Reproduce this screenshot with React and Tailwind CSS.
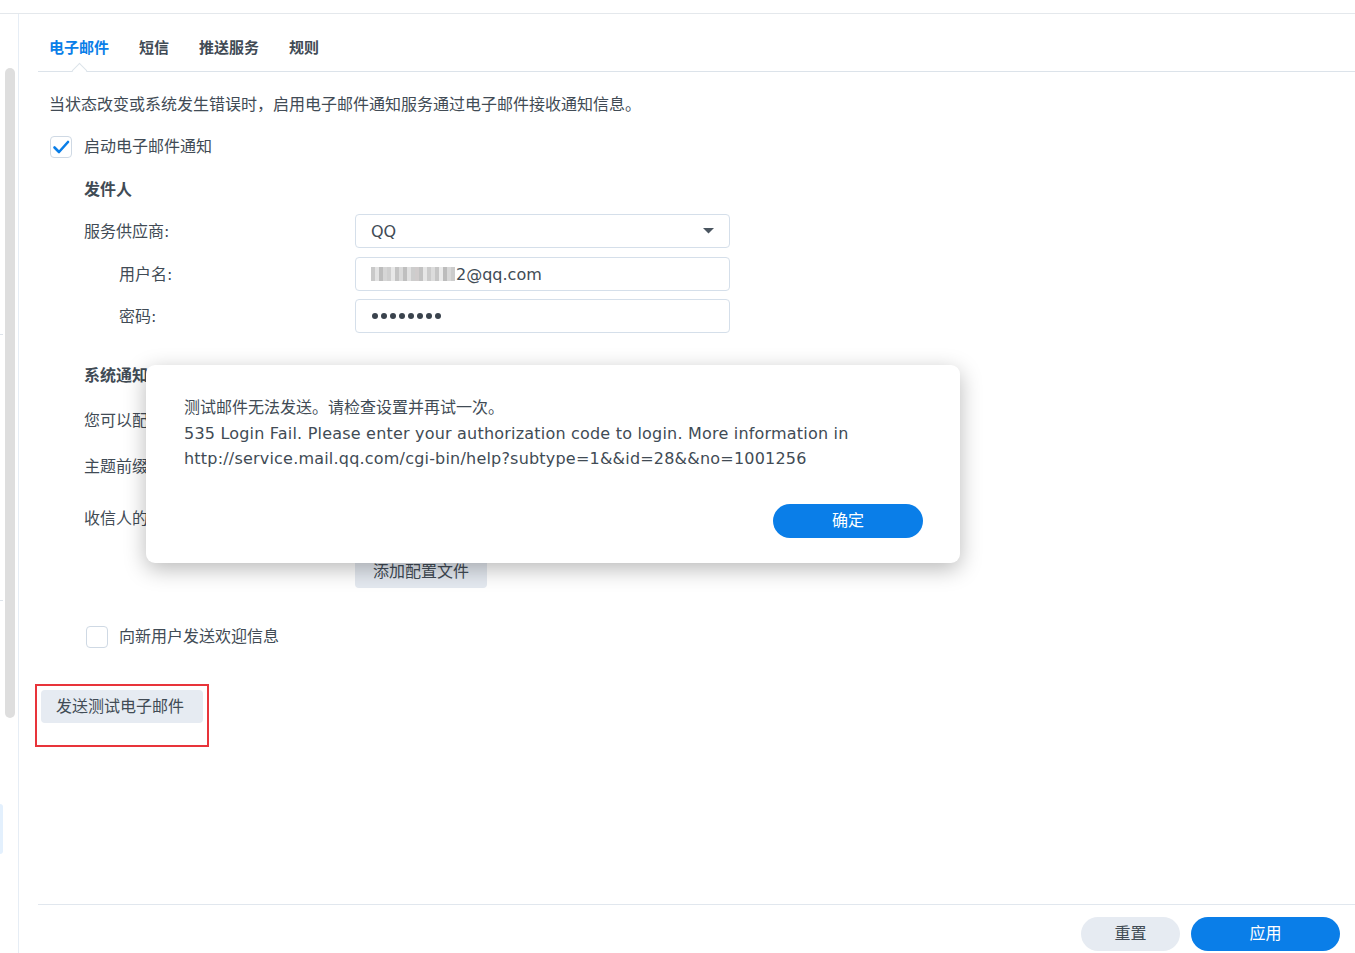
import React from 'react';

const font = { fontFamily: '"DejaVu Sans", "Noto Sans CJK SC", sans-serif' };

function Checkbox({ checked }) {
  return (
    <div className="w-[22px] h-[22px] rounded-[4px] border border-[#cfd9e4] bg-white flex items-center justify-center">
      {checked && (
        <svg width="18" height="18" viewBox="0 0 18 18">
          <path d="M2.5 9.5 L7 14 L16 4" fill="none" stroke="#0a7ee8" strokeWidth="2.6" strokeLinecap="round" strokeLinejoin="round" />
        </svg>
      )}
    </div>
  );
}

function Field({ children }) {
  return (
    <div className="w-[375px] h-[34px] rounded-[4px] border border-[#d5dfea] bg-white flex items-center px-[15px] text-[16px] text-[#414b55]">
      {children}
    </div>
  );
}

// pixelated blur over the user name
const mosaic = ['#c9c9c9', '#e3e3e3', '#bdbdbd', '#d6d6d6', '#cfcfcf', '#e8e8e8', '#c4c4c4', '#dadada', '#bfbfbf', '#e1e1e1', '#cdcdcd', '#d0cccc', '#c2c2c2', '#e6e6e6', '#cbcbcb', '#dcdcdc', '#c6c6c6', '#eaeaea', '#bcbcbc', '#d8d8d8', '#cccccc'];

export default function App() {
  return (
    <div className="w-[1355px] h-[953px] bg-white relative overflow-hidden text-[#414b55]" style={font}>
      <div className="h-[14px] border-b border-[#e4e8ec]" />

      <div className="flex h-[939px]">
        {/* left rail with scrollbar */}
        <div className="w-[19px] shrink-0 border-r border-[#e6edf5] relative">
          <div className="absolute left-[5px] top-[54px] w-[10px] h-[650px] rounded-full bg-[#dedede]" />
          <div className="absolute left-0 top-[320px] w-[3px] h-px bg-[#dde3ea]" />
          <div className="absolute left-0 top-[586px] w-[3px] h-px bg-[#dde3ea]" />
          <div className="absolute left-0 top-[790px] w-[3px] h-[50px] rounded-r bg-[#e3f0fd]" />
        </div>

        <div className="flex-1 flex flex-col pl-[19px]">
          {/* tabs */}
          <div className="relative flex items-end h-[58px] border-b border-[#dce3ea] pl-[11px] pb-[11px] gap-[30px] text-[15px] font-bold">
            <span className="text-[#0a7ee8] leading-[24px]">电子邮件</span>
            <span className="leading-[24px]">短信</span>
            <span className="leading-[24px]">推送服务</span>
            <span className="leading-[24px]">规则</span>
            <div className="absolute left-[36px] top-[51px] w-[11px] h-[11px] rotate-45 bg-white border-l border-t border-[#dce3ea]" />
          </div>

          <div className="flex-1 flex flex-col pl-[11px] text-[16px]">
            <div className="mt-[22px] leading-[22px]">当状态改变或系统发生错误时，启用电子邮件通知服务通过电子邮件接收通知信息。</div>

            <div className="mt-[20px] flex items-center gap-[12px] h-[22px] pl-px">
              <Checkbox checked />
              <span>启动电子邮件通知</span>
            </div>

            <div className="pl-[35px] mt-[21px] font-bold leading-[22px]">发件人</div>

            <div className="pl-[35px] mt-[13px] flex items-center h-[34px]">
              <span className="w-[271px] pt-[2px]">服务供应商:</span>
              <Field>
                <span className="flex-1 pt-[2px]">QQ</span>
                <svg width="11" height="6" viewBox="0 0 11 6"><path d="M0 0 H11 L5.5 5.5 Z" fill="#4a5560" /></svg>
              </Field>
            </div>
            <div className="pl-[70px] mt-[9px] flex items-center h-[34px]">
              <span className="w-[236px] pt-[2px]">用户名:</span>
              <Field>
                <div className="flex h-[14px] mr-[1px]">
                  {mosaic.map((c, i) => (
                    <div key={i} className="w-[4px] h-full" style={{ backgroundColor: c }} />
                  ))}
                </div>
                <span className="pt-[2px]">2@qq.com</span>
              </Field>
            </div>
            <div className="pl-[70px] mt-[8px] flex items-center h-[34px]">
              <span className="w-[236px] pt-[2px]">密码:</span>
              <Field>
                <div className="flex gap-[3px] pl-px">
                  {[0, 1, 2, 3, 4, 5, 6, 7].map((i) => (
                    <div key={i} className="w-[6px] h-[6px] rounded-full bg-[#3a434d]" />
                  ))}
                </div>
              </Field>
            </div>

            <div className="pl-[35px] mt-[32px] font-bold leading-[22px]">系统通知</div>
            <div className="pl-[35px] mt-[23px] leading-[22px]">您可以配置</div>
            <div className="pl-[35px] mt-[24px] flex items-center h-[22px]">
              <span>主题前缀</span>
            </div>
            <div className="pl-[35px] mt-[30px] flex items-center h-[22px]">
              <span>收信人的</span>
            </div>

            <div className="pl-[306px] mt-[25px]">
              <div className="w-[132px] h-[33px] rounded-[4px] bg-[#e4e9f0] flex items-center justify-center">添加配置文件</div>
            </div>

            <div className="pl-[37px] mt-[38px] flex items-center gap-[11px] h-[22px]">
              <Checkbox />
              <span>向新用户发送欢迎信息</span>
            </div>

            <div className="mt-[36px] -ml-[14px] w-[174px] h-[63px] border-2 border-[#e8343a] pt-[4px] pl-[4px]">
              <div className="w-[162px] h-[33px] rounded-[4px] bg-[#e6ebf2] flex items-center justify-center pr-[4px]">发送测试电子邮件</div>
            </div>
          </div>

          {/* footer */}
          <div className="h-[49px] border-t border-[#e1e7ee] flex items-start justify-end gap-[11px] pt-[12px] pr-[15px] text-[16px]">
            <button className="w-[99px] h-[34px] rounded-full bg-[#e6ebf2] text-[#414b55]">重置</button>
            <button className="w-[149px] h-[34px] rounded-full bg-[#0a7ee8] text-white">应用</button>
          </div>
        </div>
      </div>

      {/* error dialog */}
      <div className="absolute left-[146px] top-[365px] w-[814px] h-[198px] bg-white rounded-[9px] shadow-[0_6px_22px_rgba(0,0,0,0.28)] pl-[38px] pr-[37px] pt-[30px] flex flex-col">
        <div className="text-[16px] leading-[25.5px] tracking-[0.2px] text-[#414b55]">
          <div className="tracking-normal">测试邮件无法发送。请检查设置并再试一次。</div>
          <div>535 Login Fail. Please enter your authorization code to login. More information in</div>
          <div>http://service.mail.qq.com/cgi-bin/help?subtype=1&amp;&amp;id=28&amp;&amp;no=1001256</div>
        </div>
        <div className="flex justify-end mt-[32px]">
          <button className="w-[150px] h-[34px] rounded-full bg-[#0a7ee8] text-white text-[16px]">确定</button>
        </div>
      </div>
    </div>
  );
}
